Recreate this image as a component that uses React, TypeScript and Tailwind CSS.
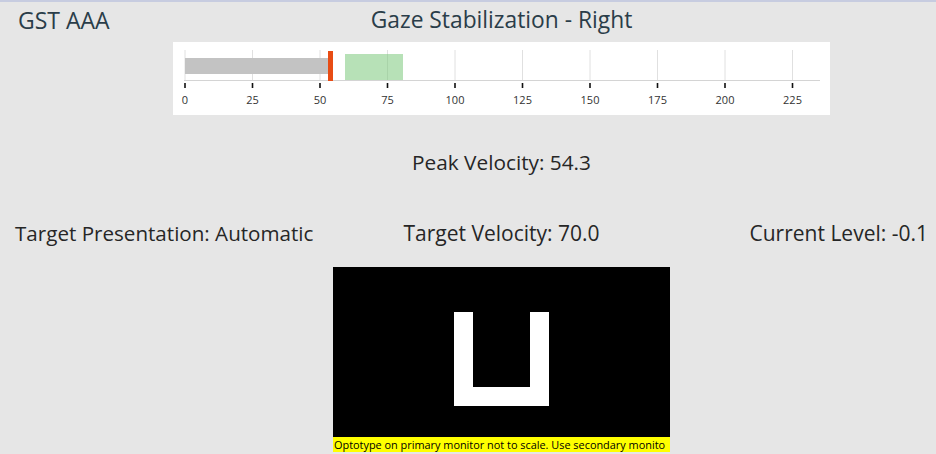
import React from "react";

const ticks = [0, 25, 50, 75, 100, 125, 150, 175, 200, 225];
const X0 = 12;
const S = 2.7;

function Chart() {
  return (
    <svg width="657" height="73" viewBox="0 0 657 73" className="block">
      {ticks.map((t) => (
        <line key={"g" + t} x1={X0 + t * S} x2={X0 + t * S} y1={8} y2={38} stroke="#e0e0e0" strokeWidth={1} />
      ))}
      <line x1={11} x2={647} y1={38.5} y2={38.5} stroke="#d4d4d4" strokeWidth={1} />
      <rect x={X0} y={16} width={144} height={16} fill="#c3c3c3" />
      <rect x={172} y={12} width={58} height={26} fill="#7cc87c" fillOpacity={0.55} />
      <rect x={155} y={9} width={5} height={30} fill="#e84c14" />
      {ticks.map((t) => (
        <line key={"t" + t} x1={X0 + t * S} x2={X0 + t * S} y1={41} y2={46} stroke="#111" strokeWidth={1.6} />
      ))}
      {ticks.map((t) => (
        <text
          key={"l" + t}
          x={X0 + t * S}
          y={62}
          textAnchor="middle"
          fontSize="11"
          fill="#333"
          fontFamily="'Open Sans', sans-serif"
        >
          {t}
        </text>
      ))}
    </svg>
  );
}

export default function App() {
  return (
    <div
      className="w-[936px] h-[454px] overflow-hidden bg-[#e6e6e6] border-t-2 border-[#c7cce0] text-[#262626]"
      style={{ fontFamily: "'Open Sans', 'Noto Sans', sans-serif" }}
    >
      <div className="grid grid-cols-[333px_337px_1fr] h-[40px]">
        <div className="pl-[18px] pt-[3px] text-[23px] leading-[30px] text-[#2a3d49]">GST AAA</div>
        <div className="pt-[3px] text-center text-[22.8px] leading-[30px] text-[#2a3d49] whitespace-nowrap">
          Gaze Stabilization - Right
        </div>
        <div />
      </div>
      <div className="ml-[173px] w-[657px] h-[73px] bg-white">
        <Chart />
      </div>
      <div className="grid grid-cols-[333px_337px_1fr] mt-[32px] h-[30px]">
        <div />
        <div className="text-center text-[20.8px] leading-[30px] whitespace-nowrap">Peak Velocity: 54.3</div>
        <div />
      </div>
      <div className="grid grid-cols-[333px_337px_1fr] mt-[41px] h-[30px]">
        <div className="pl-[15px] text-[20.6px] leading-[30px] whitespace-nowrap">Target Presentation: Automatic</div>
        <div className="text-center text-[21px] leading-[30px] whitespace-nowrap">Target Velocity: 70.0</div>
        <div className="pr-[8px] text-right text-[21px] leading-[30px] whitespace-nowrap">Current Level: -0.1</div>
      </div>
      <div className="grid grid-cols-[333px_337px_1fr] mt-[19px]">
        <div />
        <div className="flex flex-col">
          <div className="h-[170px] bg-black flex items-center justify-center">
            <div className="w-[95px] h-[94px] border-[19px] border-t-0 border-white mt-[14px]" />
          </div>
          <div className="h-[15px] bg-[#ffff00] text-black text-[10.9px] leading-[15px] whitespace-nowrap overflow-hidden pl-[1px]">
            Optotype on primary monitor not to scale. Use secondary monito
          </div>
        </div>
        <div />
      </div>
    </div>
  );
}
